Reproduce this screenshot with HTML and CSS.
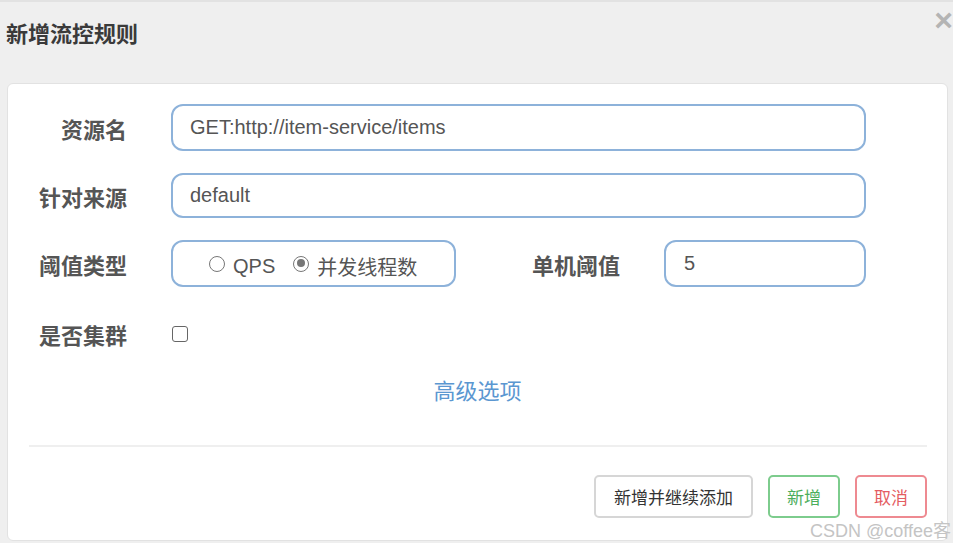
FILE: index.html
```html
<!DOCTYPE html>
<html lang="zh">
<head>
<meta charset="utf-8">
<title>新增流控规则</title>
<link rel="stylesheet" href="styles.css">
</head>
<body>
<div class="dialog">
  <div class="header">
    <h1 class="title">新增流控规则</h1>
    <span class="close">×</span>
  </div>
  <div class="card">
    <div class="form">
      <div class="row">
        <label class="label">资源名</label>
        <div class="input wide">GET:http://item-service/items</div>
      </div>
      <div class="row">
        <label class="label">针对来源</label>
        <div class="input wide short">default</div>
      </div>
      <div class="row">
        <label class="label">阈值类型</label>
        <div class="input radios">
          <span class="radio"></span><span class="rtext">QPS</span>
          <span class="radio checked"></span><span class="rtext cjk">并发线程数</span>
        </div>
        <label class="label label2">单机阈值</label>
        <div class="input narrow">5</div>
      </div>
      <div class="row check-row">
        <label class="label">是否集群</label>
        <span class="checkbox"></span>
      </div>
    </div>
    <div class="advanced">高级选项</div>
    <div class="divider"></div>
    <div class="footer">
      <button class="btn">新增并继续添加</button>
      <button class="btn green">新增</button>
      <button class="btn red">取消</button>
    </div>
  </div>
  <div class="watermark">CSDN @coffee客</div>
</div>
</body>
</html>
```
FILE: styles.css
```css
html, body {
  margin: 0;
  padding: 0;
}
body {
  background: #efefef;
  font-family: "Liberation Sans", Arial, "Noto Sans CJK SC", sans-serif;
  width: 953px;
  height: 543px;
  overflow: hidden;
}
.dialog {
  position: relative;
  height: 543px;
  border-top: 2px solid #e2e2e2;
  box-sizing: border-box;
}
.header {
  height: 81px;
  display: flex;
  align-items: flex-start;
  justify-content: space-between;
}
.title {
  margin: 16px 0 0 6px;
  font-size: 22px;
  line-height: 28px;
  font-weight: bold;
  color: #3a3a3a;
  font-family: "Noto Sans CJK SC", sans-serif;
}
.close {
  font-size: 32px;
  line-height: 26px;
  color: #b4b4b4;
  font-weight: bold;
  margin: 5px 0 0 0;
  font-family: "Liberation Sans", Arial, sans-serif;
}
.card {
  margin: 0 5px 0 7px;
  height: 458px;
  background: #fff;
  border: 1px solid #e2e2e2;
  border-radius: 6px;
  box-sizing: border-box;
  padding-top: 20px;
}
.form {
  display: flex;
  flex-direction: column;
}
.row {
  display: flex;
  align-items: center;
  margin-bottom: 22px;
}
.label {
  width: 119px;
  flex: none;
  text-align: right;
  font-family: "Noto Sans CJK SC", sans-serif;
  font-weight: bold;
  font-size: 22px;
  color: #555;
  margin-right: 44px;
}
.label2 {
  width: 164px;
  margin-right: 44px;
}
.input {
  box-sizing: border-box;
  height: 47px;
  border: 2px solid #8db2da;
  border-radius: 12px;
  display: flex;
  align-items: center;
  padding-left: 17px;
  font-size: 20px;
  color: #555;
  flex: none;
}
.wide {
  width: 695px;
}
.short {
  height: 45px;
}
.radios {
  width: 285px;
  padding-left: 36px;
  padding-top: 5px;
}
.narrow {
  width: 202px;
  padding-left: 18px;
}
.radio {
  width: 16px;
  height: 16px;
  border: 1.5px solid #777;
  border-radius: 50%;
  box-sizing: border-box;
  margin-right: 8px;
  margin-top: -5px;
  position: relative;
  flex: none;
  background: #fff;
}
.radio.checked::after {
  content: "";
  position: absolute;
  left: 2.5px;
  top: 2.5px;
  width: 8px;
  height: 8px;
  border-radius: 50%;
  background: #777;
}
.rtext {
  margin-right: 18px;
  font-size: 20px;
  color: #555;
}
.cjk {
  font-family: "Noto Sans CJK SC", sans-serif;
  font-size: 20px;
}
.check-row {
  margin-top: 11px;
  margin-bottom: 0;
  height: 28px;
}
.checkbox {
  width: 16px;
  height: 16px;
  box-sizing: border-box;
  border: 1.5px solid #666;
  border-radius: 3px;
  margin-left: 1px;
}
.advanced {
  margin-top: 26px;
  text-align: center;
  font-family: "Noto Sans CJK SC", sans-serif;
  font-size: 22px;
  line-height: 30px;
  color: #5b97d1;
}
.divider {
  margin: 41px 20px 0 21px;
  height: 2px;
  background: #efefef;
}
.footer {
  display: flex;
  justify-content: flex-end;
  gap: 15px;
  margin: 28px 20px 0 0;
}
.btn {
  height: 43px;
  padding: 0 18px;
  background: #fff;
  border: 2px solid #d6d6d6;
  border-radius: 5px;
  font-family: "Noto Sans CJK SC", sans-serif;
  font-size: 17px;
  color: #333;
}
.btn.green {
  width: 72px;
  padding: 0;
  border-color: #7dcc8d;
  color: #4cae5c;
}
.btn.red {
  width: 72px;
  padding: 0;
  border-color: #ee8a91;
  color: #e45c62;
}
.watermark {
  position: absolute;
  left: 810px;
  top: 514px;
  font-size: 18px;
  color: #c4c4c4;
  font-family: "Liberation Sans", Arial, "Noto Sans CJK SC", sans-serif;
  white-space: nowrap;
}
```
